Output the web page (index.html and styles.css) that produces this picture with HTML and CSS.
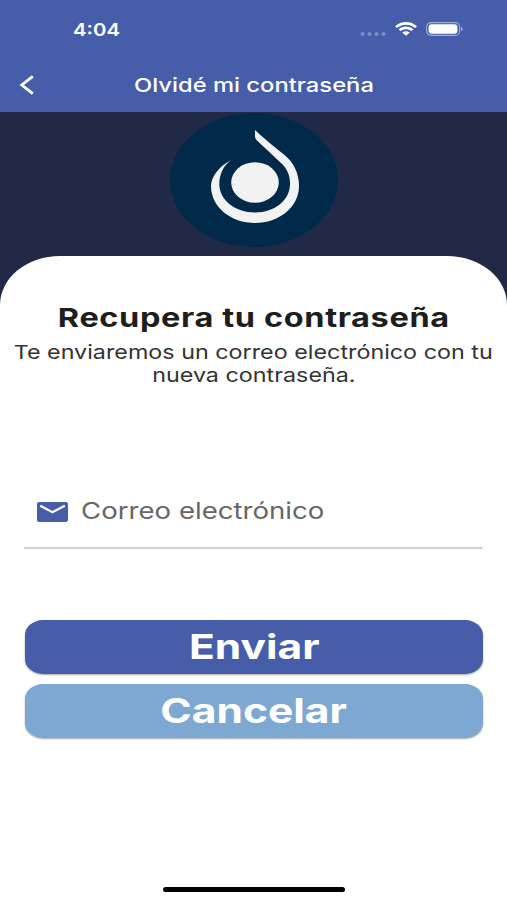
FILE: index.html
```html
<!DOCTYPE html>
<html lang="es">
<head>
    <meta charset="UTF-8">
    <title>Olvidé mi contraseña</title>
    <link rel="stylesheet" href="styles.css">
</head>
<body>

<div class="status-bar">
    <span class="time">4:04</span>
    <div class="status-icons">
        <svg class="signal" width="26" height="4" viewBox="0 0 26 4">
            <circle cx="2.5" cy="2" r="2"/>
            <circle cx="9.5" cy="2" r="2"/>
            <circle cx="16.5" cy="2" r="2"/>
            <circle cx="23.5" cy="2" r="2"/>
        </svg>
        <svg class="wifi" width="22" height="14" viewBox="0 0 22 14">
            <path d="M0 4.3C6-1.4 16-1.4 22 4.3L20 6.1C15 1.6 7 1.6 2 6.1Z"/>
            <path d="M3.6 7.4C8 3.6 14 3.6 18.4 7.4L16.4 9.1C13.2 6.5 8.8 6.5 5.6 9.1Z"/>
            <path d="M7.2 10.5C9.4 8.9 12.6 8.9 14.8 10.5L11 13.8Z"/>
        </svg>
        <svg class="battery" width="38" height="14" viewBox="0 0 38 14">
            <rect class="battery-case" x="0.6" y="0.6" width="33" height="12.8" rx="4.5"/>
            <rect x="2.6" y="2.2" width="28.8" height="9.6" rx="3"/>
            <path class="battery-tip" d="M35 4.8C37.4 5.6 37.4 8.4 35 9.2Z"/>
        </svg>
    </div>
</div>

<div class="navbar">
    <a href="#" class="back">
        <svg width="16" height="20" viewBox="0 0 16 20">
            <path d="M13.8 1.3L2.8 10L13.8 18.7"/>
        </svg>
    </a>
    <h1 class="navbar-title"><span>Olvidé mi contraseña</span></h1>
</div>

<div class="banner">
    <svg class="logo" width="168" height="134" viewBox="0 0 168 134">
        <ellipse class="logo-back" cx="84" cy="67" rx="84" ry="67"/>
        <ellipse cx="85" cy="69.5" rx="23.8" ry="20.3"/>
        <path d="M85 17C89 21 102 32 114 41.5C124 49.5 129 61 129 73C129 94 109 110 85 110C61 110 41 94 41 73C41 64 49 53 61.500 47C53.500 51.500 49.300 62 49.300 71C49.300 87 65 99.500 85 99.500C105 99.500 120 87 120 71C120 62 117 55.500 111 50L87.500 28C85.500 26 85 25 85 23Z"/>
    </svg>
</div>

<div class="card">
    <h2 class="card-title"><span>Recupera tu contraseña</span></h2>
    <p class="card-text"><span>Te enviaremos un correo electrónico con tu</span><span>nueva contraseña.</span></p>

    <div class="field">
        <svg class="mail-icon" width="31" height="20" viewBox="0 0 31 20">
            <rect width="31" height="20" rx="2.2"/>
            <path d="M3.2 3.7L15.5 10.2L27.8 3.7"/>
        </svg>
        <span class="placeholder">Correo electrónico</span>
    </div>

    <div class="buttons">
        <button class="btn btn-send"><span>Enviar</span></button>
        <button class="btn btn-cancel"><span>Cancelar</span></button>
    </div>

    <div class="home-indicator"></div>
</div>

</body>
</html>
```
FILE: styles.css
```css
* {
    box-sizing: border-box;
}

body {
    margin: 0;
    height: 900px;
    display: flex;
    flex-direction: column;
    background-color: #222946;
    font-family: Inter, "Liberation Sans", sans-serif;
    overflow: hidden;
}

h1, h2, p {
    margin: 0;
}

/* wide lettering */
.time,
.navbar-title span,
.card-title span,
.card-text span,
.placeholder,
.btn span {
    display: inline-block;
    white-space: nowrap;
    transform: scaleX(1.25);
}

.status-bar {
    height: 58px;
    padding: 0 43px 0 73px;
    display: flex;
    justify-content: space-between;
    align-items: center;
    background-color: #465da9;
    color: #fff;
}

.status-bar .time {
    font-size: 17.5px;
    font-weight: 600;
    transform: scaleX(1.16);
    transform-origin: left;
}

.status-icons {
    display: flex;
    align-items: center;
    fill: #fff;
}

.signal {
    margin: 9px 9px 0 0;
    opacity: 0.3;
}

.wifi {
    margin-right: 9px;
}

.battery-case {
    fill: none;
    stroke: #fff;
    stroke-width: 1.1;
    opacity: 0.5;
}

.battery-tip {
    opacity: 0.5;
}

.navbar {
    height: 54px;
    padding: 0 19px;
    display: grid;
    grid-template-columns: 16px 1fr 16px;
    align-items: center;
    background-color: #465da9;
    color: #fff;
}

.back {
    display: flex;
}

.back path {
    fill: none;
    stroke: #fff;
    stroke-width: 2.8;
}

.navbar-title {
    font-size: 19px;
    font-weight: 500;
    text-align: center;
}

.banner {
    height: 144px;
    padding-top: 1px;
    display: flex;
    justify-content: center;
}

.logo {
    fill: #f2f2f2;
}

.logo-back {
    fill: #012a4a;
}

.card {
    flex: 1;
    padding: 45px 24px 8px;
    display: flex;
    flex-direction: column;
    background-color: #fff;
    border-radius: 60px 60px 0 0 / 49px 49px 0 0;
}

.card-title {
    height: 34px;
    font-size: 26px;
    line-height: 34px;
    font-weight: 700;
    letter-spacing: 0.5px;
    text-align: center;
    color: #1e1e1e;
}

.card-text {
    margin-top: 6px;
    display: flex;
    flex-direction: column;
    align-items: center;
    font-size: 19px;
    line-height: 23px;
    color: #333;
}

.card-text span {
    transform: scaleX(1.227);
}

.field {
    height: 73px;
    margin-top: 89px;
    padding-left: 13px;
    display: flex;
    align-items: center;
    border-bottom: 2px solid #cfcfcf;
}

.mail-icon {
    margin-right: 13px;
    fill: #465da9;
}

.mail-icon path {
    fill: none;
    stroke: #fff;
    stroke-width: 2.2;
}

.field .placeholder {
    padding-bottom: 2px;
    font-size: 22.5px;
    color: #666;
    transform: scaleX(1.227);
    transform-origin: left;
}

.buttons {
    margin-top: 70.5px;
    padding-left: 0.5px;
    display: flex;
    flex-direction: column;
    gap: 10px;
}

.btn {
    height: 54px;
    padding: 0;
    border: none;
    border-radius: 18px / 15px;
    font-family: inherit;
    font-size: 34px;
    line-height: 54px;
    font-weight: 700;
    color: #fff;
    box-shadow: 0 1px 2px rgba(0, 0, 0, 0.35);
}

.btn-send {
    background-color: #465da9;
}

.btn-cancel {
    background-color: #7ca8d2;
}

.home-indicator {
    width: 182px;
    height: 5px;
    margin: auto auto 0;
    border-radius: 3px;
    background-color: #000;
}
```
